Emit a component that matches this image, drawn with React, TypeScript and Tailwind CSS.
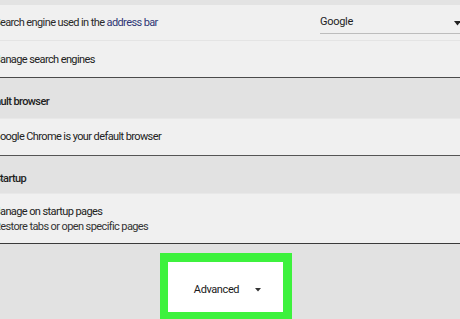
export default function App() {
  return (
    <div className="flex h-[319px] w-[460px] flex-col overflow-hidden bg-[#e2e2e2] font-['Roboto',sans-serif] text-[11px] tracking-[-0.6px] text-[#222]">
      <div className="h-[5px] shrink-0 bg-[#e3e3e3]" />

      {/* Search engine */}
      <div className="flex h-[35px] shrink-0 items-center justify-between bg-[#f0f0f0] pt-[2px]">
        <span className="ml-[-6px] whitespace-nowrap text-[#2a2a2a]">
          Search engine used in the <span className="text-[#2f3675]">address bar</span>
        </span>
        <div className="relative mt-[-2px] flex h-[22px] w-[140px] items-center border-b border-[#bdbdbd]">
          <span className="tracking-[-0.3px] text-[#1e1e1e]">Google</span>
          <svg className="absolute right-[-1px] top-[9px]" width="7" height="5" viewBox="0 0 7 5">
            <path d="M0 0h7L3.5 4.5z" fill="#222" />
          </svg>
        </div>
      </div>
      <div className="h-px shrink-0 bg-[#e4e4e4]" />
      <div className="flex h-[36px] shrink-0 items-center bg-[#f0f0f0] pt-[2px]">
        <span className="ml-[-9px] whitespace-nowrap">Manage search engines</span>
      </div>
      <div className="h-px shrink-0 bg-[#4a4a4a]" />

      {/* Default browser */}
      <div className="flex h-[40px] shrink-0 items-center bg-[#e2e2e2] pt-[8px]">
        <span className="ml-[-20px] whitespace-nowrap font-medium text-[#1e1e1e]">Default browser</span>
      </div>
      <div className="h-px shrink-0 bg-[#e8e8e8]" />
      <div className="flex h-[36px] shrink-0 items-center bg-[#f0f0f0]">
        <span className="ml-[-7px] whitespace-nowrap">Google Chrome is your default browser</span>
      </div>
      <div className="h-px shrink-0 bg-[#555]" />

      {/* Startup */}
      <div className="flex h-[37px] shrink-0 items-center bg-[#e2e2e2] pt-[10px]">
        <span className="ml-[-6px] whitespace-nowrap font-medium text-[#1e1e1e]">Startup</span>
      </div>
      <div className="h-px shrink-0 bg-[#e8e8e8]" />
      <div className="flex h-[49px] shrink-0 flex-col bg-[#f0f0f0] pt-[10px] leading-[15px]">
        <span className="ml-[-9px] whitespace-nowrap">Manage on startup pages</span>
        <span className="ml-[-6px] whitespace-nowrap text-[#333]">Restore tabs or open specific pages</span>
      </div>
      <div className="h-px shrink-0 bg-[#3a3a3a]" />

      {/* Advanced */}
      <div className="flex-1 bg-[#e2e2e2] pt-[9px]">
        <div className="ml-[160px] h-[80px] w-[132px] bg-[#3df23d] pl-[8px] pr-[9px] pt-[9px]">
          <div className="flex h-[50px] items-center justify-center gap-[16px] bg-white pl-[4px] pt-[6px]">
            <span className="text-[11px] tracking-[-0.4px] text-[#1a1a1a]">Advanced</span>
            <svg width="6" height="4" viewBox="0 0 6 4">
              <path d="M0 0h6L3 3.5z" fill="#333" />
            </svg>
          </div>
        </div>
      </div>
    </div>
  );
}
